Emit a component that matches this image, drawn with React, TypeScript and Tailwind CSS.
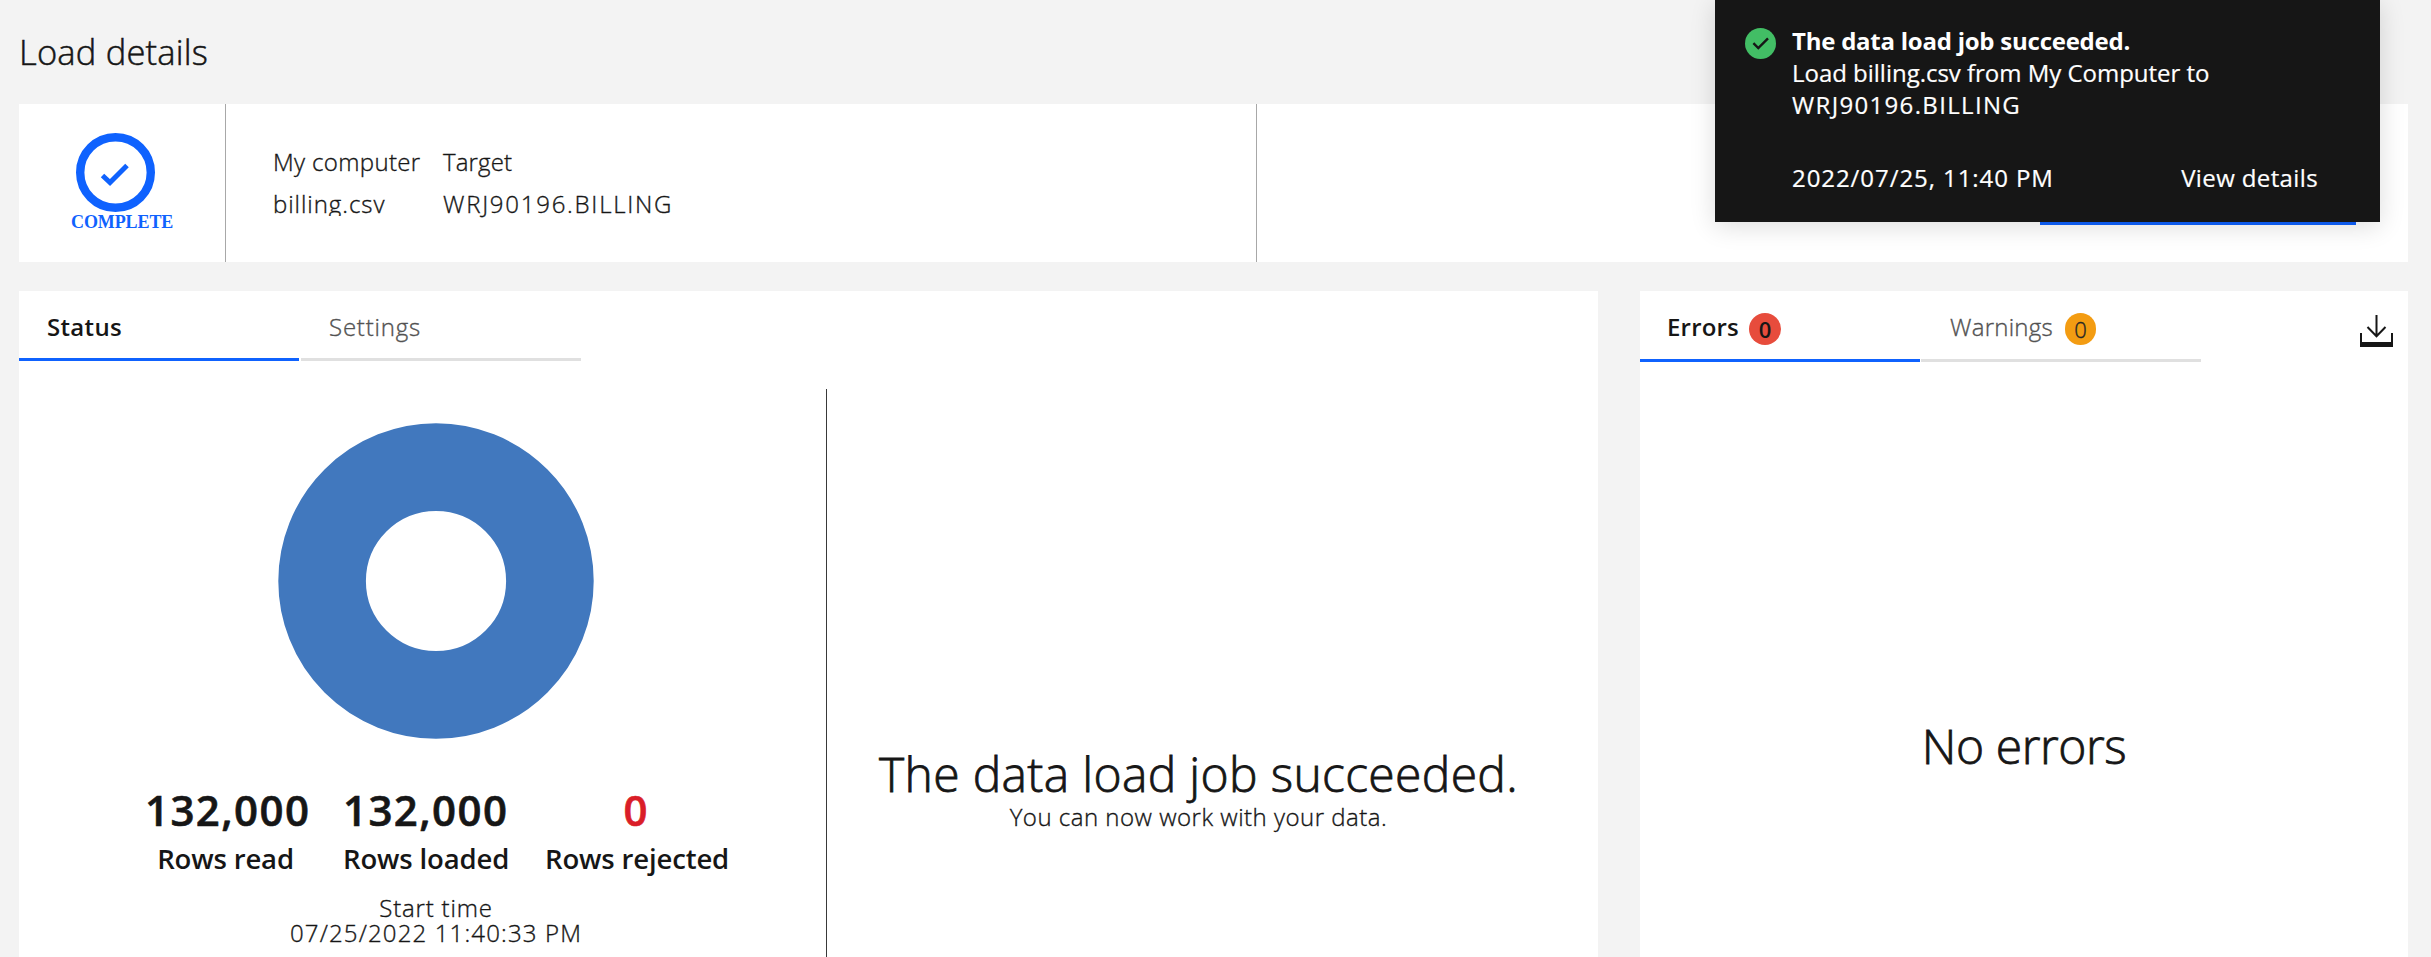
import type { ReactNode } from "react";

function CompleteIcon() {
  return (
    <svg className="ml-[56.5px] size-[79px]" viewBox="0 0 79 79" fill="none">
      <circle cx="39.5" cy="39.5" r="35.3" stroke="#0f62fe" strokeWidth="8.4" />
      <path d="M26.5 42.5L34 49.5L51 32.5" stroke="#0f62fe" strokeWidth="5" />
    </svg>
  );
}

function ToastIcon() {
  return (
    <svg className="mt-[28px] size-[31px] shrink-0" viewBox="0 0 31 31" fill="none">
      <circle cx="15.5" cy="15.5" r="15.5" fill="#42be65" />
      <path d="M8.4 15.2L13.3 20.1L23 10.4" stroke="#161616" strokeWidth="2.4" />
    </svg>
  );
}

function DownloadIcon() {
  return (
    <svg className="mt-[24px] mr-[15px] h-8 w-[33px]" viewBox="0 0 33 32" fill="none" stroke="#161616">
      <path d="M16.5 0V21M7.5 12L16.5 21.2L25.5 12" strokeWidth="2" />
      <path d="M1 18V32M32 18V32" strokeWidth="2" />
      <path d="M0 29.5H33" strokeWidth="5" />
    </svg>
  );
}

function Donut() {
  return (
    <svg className="size-[316px]" viewBox="0 0 316 316" fill="none">
      <circle cx="158" cy="158" r="113.9" stroke="#4178be" strokeWidth="87.6" />
    </svg>
  );
}

function Tab({ active, className, children }: { active?: boolean; className: string; children: ReactNode }) {
  return (
    <button
      className={`flex w-[280px] items-start border-b-[3px] pt-5 text-left text-[24px] leading-8 ${
        active
          ? "border-[#0f62fe] font-semibold text-[#161616]"
          : "border-[#e0e0e0] font-light text-[#525252] [-webkit-text-stroke:0.35px]"
      } ${className}`}
    >
      {children}
    </button>
  );
}

export default function App() {
  return (
    <div className="relative flex h-[957px] w-[2431px] flex-col overflow-hidden bg-[#f3f3f3] pr-[23px] pl-[19px] font-['Open_Sans',sans-serif] text-[#161616]">
      <h1 className="h-[104px] shrink-0 pt-8 text-[34.5px] leading-10 font-light tracking-[0.2px] [-webkit-text-stroke:0.5px]">
        Load details
      </h1>

      <section className="flex h-[158px] shrink-0 bg-white">
        <div className="w-[206px] pt-[29px]">
          <CompleteIcon />
          <div className="mt-[2px] ml-[52px] font-['Liberation_Serif',serif] text-[18px] leading-4 font-bold tracking-[-0.1px] text-[#0f62fe]">
            COMPLETE
          </div>
        </div>
        <div className="flex w-[1032px] gap-[23px] border-x border-[#a8a8a8] pt-[42px] pl-[47px] text-[24px] leading-8 font-light [-webkit-text-stroke:0.35px]">
          <div className="w-[147px] whitespace-nowrap">
            <div className="tracking-[0.35px]">My computer</div>
            <div className="mt-[10px] h-7 overflow-hidden tracking-[0.95px]">billing.csv</div>
          </div>
          <div className="whitespace-nowrap">
            <div className="tracking-[0.14px]">Target</div>
            <div className="mt-[10px] tracking-[1.75px]">WRJ90196.BILLING</div>
          </div>
        </div>
        <div className="flex flex-1 justify-end pr-[52px]">
          <button className="mt-[37px] h-[84px] w-[316px] bg-[#0f62fe]" />
        </div>
      </section>

      <div className="mt-[29px] flex flex-1 gap-[42px]">
        <section className="flex w-[1579px] flex-col bg-white">
          <div className="flex h-[70px] gap-[2px]">
            <Tab active className="pl-[28px] tracking-[0.33px]">Status</Tab>
            <Tab className="pl-[28px] tracking-[0.8px]">Settings</Tab>
          </div>
          <div className="mt-[28px] flex flex-1">
            <div className="flex w-[808px] flex-col items-center border-r border-[#393939] pt-[34px] pl-[27px]">
              <Donut />
              <div className="mt-[47px] flex gap-[37px] text-center text-[27.5px] leading-9 font-semibold tracking-[-0.15px] whitespace-nowrap">
                <div className="-ml-px w-[161px]">
                  <div className="text-[42px] leading-[48px] tracking-[1.4px] [-webkit-text-stroke:0.6px]">132,000</div>
                  <div className="mt-[7px]">Rows read</div>
                </div>
                <div className="w-[165px]">
                  <div className="text-[42px] leading-[48px] tracking-[1.4px] [-webkit-text-stroke:0.6px]">132,000</div>
                  <div className="mt-[7px]">Rows loaded</div>
                </div>
                <div className="w-[181px]">
                  <div className="text-[42px] leading-[48px] text-[#da1e28] [-webkit-text-stroke:0.6px]">0</div>
                  <div className="mt-[7px]">Rows rejected</div>
                </div>
              </div>
              <div className="mt-[18px] text-center text-[24px] leading-[25px] font-light [-webkit-text-stroke:0.35px]">
                <div className="tracking-[0.8px]">Start time</div>
                <div className="tracking-[1.15px]">07/25/2022 11:40:33 PM</div>
              </div>
            </div>
            <div className="flex-1 pt-[357px] pr-[28px] text-center font-light whitespace-nowrap">
              <div className="text-[48px] leading-[56px] tracking-[0.33px] [-webkit-text-stroke:0.8px]">The data load job succeeded.</div>
              <div className="-mt-px text-[24px] leading-8 tracking-[0.5px] [-webkit-text-stroke:0.35px]">You can now work with your data.</div>
            </div>
          </div>
        </section>

        <section className="flex flex-1 flex-col bg-white">
          <div className="flex justify-between">
            <div className="flex h-[71px] gap-px">
              <Tab active className="pl-[27px]">
                <span className="w-[82px] tracking-[0.2px]">Errors</span>
                <span className="mt-[2px] flex size-8 items-center justify-center rounded-full bg-[#e74c3c] text-[22px]">0</span>
              </Tab>
              <Tab className="pl-[29px]">
                <span className="w-[115px] tracking-[0.25px]">Warnings</span>
                <span className="mt-[2px] flex h-8 w-[31px] items-center justify-center rounded-full bg-[#f39c12] text-[22px] text-[#262626]">0</span>
              </Tab>
            </div>
            <DownloadIcon />
          </div>
          <div className="pt-[356px] text-center text-[48px] leading-[56px] font-light tracking-[-0.4px] [-webkit-text-stroke:0.8px]">No errors</div>
        </section>
      </div>

      <aside className="absolute top-0 left-[1715px] flex h-[222px] w-[665px] bg-[#161616] pl-[30px] text-[24px] leading-8 text-white shadow-[0_4px_24px_rgba(0,0,0,0.14)]">
        <ToastIcon />
        <div className="flex-1 pt-[25px] pl-[16px] whitespace-nowrap">
          <div className="font-bold tracking-[-0.24px]">The data load job succeeded.</div>
          <div className="tracking-[-0.02px] [-webkit-text-stroke:0.2px]">Load billing.csv from My Computer to</div>
          <div className="tracking-[1.33px] [-webkit-text-stroke:0.2px]">WRJ90196.BILLING</div>
          <div className="mt-[41px] flex justify-between pr-[62px] [-webkit-text-stroke:0.2px]">
            <span className="tracking-[0.93px]">2022/07/25, 11:40 PM</span>
            <span className="tracking-[0.38px]">View details</span>
          </div>
        </div>
      </aside>
    </div>
  );
}
